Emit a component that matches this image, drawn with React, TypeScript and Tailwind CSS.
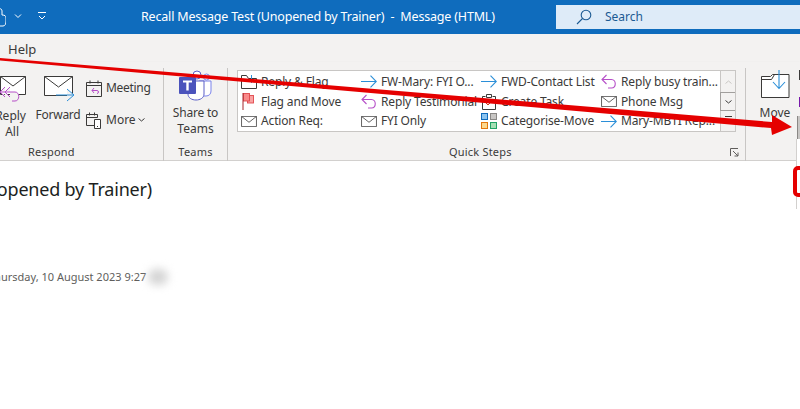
import React from 'react';

const font = { fontFamily: '"Noto Sans", "Open Sans", sans-serif' };

// 메일 봉투 아이콘
const Envelope = ({ size = 20 }: { size?: number }) => (
  <svg width={size} height={Math.round(size * 0.7)} viewBox="0 0 20 14" fill="none" stroke="#3b3a39" strokeWidth="1">
    <path d="M.5.5h19v13H.5z" fill="#fff" />
    <path d="M.5.5 10 8l9.5-7.5" />
  </svg>
);

const BlueArrow = () => (
  <svg width="16" height="13" viewBox="0 0 16 13" fill="none" stroke="#2b8fd8" strokeWidth="1.1">
    <path d="M0 6.500h15M9.500.7l5.800 5.800-5.800 5.800" />
  </svg>
);

const PurpleReply = () => (
  <svg width="16" height="15" viewBox="0 0 16 15" fill="none" stroke="#b64fc8" strokeWidth="1.1">
    <path d="M5.500 1 1 5.500 5.500 10M1 5.500h9.500c5 0 5 8.500 0 8.500H7" />
  </svg>
);

const FlagIcon = () => (
  <svg width="16" height="17" viewBox="0 0 16 17">
    <rect x="6.500" y="2.500" width="6" height="7.500" fill="#f9a3a3" stroke="#e0474c" strokeWidth=".9" />
    <rect x="2.500" y=".5" width="6" height="7.500" fill="#f98a8a" stroke="#e0474c" strokeWidth=".9" />
    <path d="M2 0v17" stroke="#a4262c" strokeWidth="1" />
  </svg>
);

const TaskIcon = () => (
  <svg width="16" height="17" viewBox="0 0 16 17" fill="none" stroke="#3b3a39">
    <path d="M4.500 3.500h-3v13h13v-13h-3M5.500 1.500h5v3h-5z" fill="#fff" />
    <path d="M5 10l2 2 4-4" stroke="#c43e1c" />
  </svg>
);

const CategoryIcon = () => (
  <svg width="16" height="16" viewBox="0 0 16 16">
    <rect x=".5" y=".5" width="6" height="6" fill="#8cc4ef" stroke="#0f6cbd" />
    <rect x="9.500" y=".5" width="6" height="6" fill="#c8c6c4" stroke="#8a8886" />
    <rect x=".5" y="9.500" width="6" height="6" fill="#fcd88f" stroke="#e3770e" />
    <rect x="9.500" y="9.500" width="6" height="6" fill="#a6dfb5" stroke="#21a366" />
  </svg>
);

const ReplyFlagIcon = () => (
  <svg width="16" height="14" viewBox="0 0 16 14" fill="none" stroke="#3b3a39">
    <path d="M.5 3.500V.5h5l2 3h8v10H.5z" />
    <path d="M10.500 0v8" stroke="#2b8fd8" />
  </svg>
);

const quickSteps: { icon: React.ReactNode; label: string }[][] = [
  [
    { icon: <ReplyFlagIcon />, label: 'Reply & Flag' },
    { icon: <FlagIcon />, label: 'Flag and Move' },
    { icon: <Envelope size={16} />, label: 'Action Req:' },
  ],
  [
    { icon: <BlueArrow />, label: 'FW-Mary: FYI O...' },
    { icon: <PurpleReply />, label: 'Reply Testimonial' },
    { icon: <Envelope size={16} />, label: 'FYI Only' },
  ],
  [
    { icon: <BlueArrow />, label: 'FWD-Contact List' },
    { icon: <TaskIcon />, label: 'Create Task' },
    { icon: <CategoryIcon />, label: 'Categorise-Move' },
  ],
  [
    { icon: <PurpleReply />, label: 'Reply busy train...' },
    { icon: <Envelope size={16} />, label: 'Phone Msg' },
    { icon: <BlueArrow />, label: 'Mary-MBTI Rep...' },
  ],
];

const App = () => {
  return (
    <div className="relative w-[800px] h-[409px] overflow-hidden bg-white flex flex-col text-[#3b3a39]" style={font}>
      {/* 타이틀 바 */}
      <div className="h-[34px] bg-[#0f6cbd] flex items-center text-white shrink-0">
        <svg width="6" height="20" viewBox="0 0 6 20" fill="none" stroke="#fff" strokeWidth="1" className="shrink-0">
          <path d="M-3 8h1V4c0-3 4-3 4 0v4c3 0 4 1 4 3v3c0 3-1 5-3 5H-3" />
        </svg>
        <svg width="8" height="5" viewBox="0 0 8 5" fill="none" stroke="#fff" className="ml-[8px] mt-[-2px]">
          <path d="M1 .5 4 3.500 7 .5" />
        </svg>
        <svg width="10" height="9" viewBox="0 0 10 9" fill="none" stroke="#fff" className="ml-[15px] mb-[1px]">
          <path d="M1 .5h8M2 4l3 3 3-3" />
        </svg>
        <span className="ml-[94px] w-[415px] text-[12.5px] tracking-[-0.18px] whitespace-pre">Recall Message Test (Unopened by Trainer)  -  Message (HTML)</span>
        <div className="w-[244px] h-[24px] bg-[#deebf8] flex items-center text-[#1c5a93] text-[12px]">
          <svg width="16" height="16" viewBox="0 0 16 16" fill="none" stroke="#1c5a93" strokeWidth="1.1" className="ml-[20px]">
            <circle cx="10" cy="6" r="4.800" />
            <path d="M6.500 9.500 1 15" />
          </svg>
          <span className="ml-[13px]">Search</span>
        </div>
      </div>

      {/* 탭 */}
      <div className="h-[28px] bg-[#f3f2f1] flex items-center pl-[8px] pt-[3px] text-[13px] shrink-0">
        <span>Help</span>
      </div>

      {/* 리본 */}
      <div className="h-[99px] bg-[#f3f2f1] border-b border-[#d2d0ce] flex text-[12px] shrink-0 shadow-[0_1px_2px_rgba(0,0,0,0.12)]">
        <div className="w-[164px] h-[93px] mt-[6px] border-r border-[#c8c6c4] flex flex-col shrink-0">
          <div className="flex h-[76px]">
            <div className="w-[38px] -ml-[12px] flex flex-col items-end leading-[16px] shrink-0">
              <svg width="33" height="33" viewBox="0 0 33 33" fill="none" className="mt-[8px]">
                <path d="M7.500.5h25v18h-25z" fill="#fff" stroke="#3b3a39" />
                <path d="M7.500.500 20 10 32.500.5" stroke="#3b3a39" />
                <path d="M12 11l-5 5 5 5M17 11l-5 5 5 5M8 16h14c5 0 5 9 0 9h-3" stroke="#b64fc8" fill="#f3f2f1" />
              </svg>
              <span className="mt-[-1px]">Reply</span>
              <span className="pr-[7px]">All</span>
            </div>
            <div className="w-[46px] ml-[9px] flex flex-col items-center leading-[16px] shrink-0">
              <svg width="31" height="27" viewBox="0 0 31 27" fill="none" className="mt-[8px] ml-[3px]">
                <path d="M.5.5h28v19H.5z" fill="#fff" stroke="#3b3a39" />
                <path d="M.5.500 14.500 11l14-10.500" stroke="#3b3a39" />
                <path d="M12 19h17M23 13l7 6-7 6" stroke="#2b8fd8" fill="#f3f2f1" />
              </svg>
              <span className="mt-[4px] tracking-[-0.25px]">Forward</span>
            </div>
            <div className="ml-[5px] flex flex-col pt-[11px] gap-[14px]">
              <div className="flex items-center gap-[3px]">
                <svg width="17" height="17" viewBox="0 0 17 17" fill="none" stroke="#3b3a39">
                  <path d="M.5 2.500h15v14H.5zM.5 5.500h15M4 .5v3M12 .5v3" />
                  <path d="M8 8 6 10.500 8 13M6 10.500h5c2 0 2 3 0 3" stroke="#b64fc8" />
                </svg>
                <span className="tracking-[-0.3px]">Meeting</span>
              </div>
              <div className="flex items-center gap-[3px]">
                <svg width="17" height="17" viewBox="0 0 17 17" fill="none" stroke="#3b3a39">
                  <path d="M8 13.500H.5V2.500h11v3M.5 5.500h11M3.500 .5v3M8.500 .5v3" />
                  <path d="M8.500 7.500h6v9h-6zM11 14.500h1" fill="#fff" />
                </svg>
                <span>More</span>
                <svg width="7" height="4" viewBox="0 0 7 4" fill="none" stroke="#3b3a39" className="-ml-[1px]">
                  <path d="M.5.500 3.500 3 6.500.5" />
                </svg>
              </div>
            </div>
          </div>
          <div className="text-[11px] pl-[28px] leading-[16px] tracking-[0.2px]">Respond</div>
        </div>

        <div className="w-[64px] h-[93px] mt-[6px] border-r border-[#c8c6c4] flex flex-col items-center shrink-0">
          <div className="h-[76px] flex flex-col items-center leading-[16px]">
            <svg width="33" height="31" viewBox="0 0 33 31" className="mt-[2px]">
              <circle cx="18" cy="5" r="4" fill="#fff" stroke="#5b5fc7" />
              <circle cx="27.500" cy="7" r="3" fill="#fff" stroke="#7b83eb" />
              <path d="M20 11h12v10c0 3-2 5-5 5H20z" fill="#fff" stroke="#7b83eb" />
              <path d="M9 11h16v13c0 8-16 8-16 0z" fill="#fff" stroke="#5b5fc7" />
              <rect x="0" y="7" width="17" height="17" rx="1" fill="#4b53bc" />
              <path d="M4 10.500h9v2H9.700v8H7.300v-8H4z" fill="#fff" />
            </svg>
            <span className="mt-[4px] tracking-[-0.2px]">Share to</span>
            <span>Teams</span>
          </div>
          <div className="text-[11px] leading-[16px] tracking-[0.2px]">Teams</div>
        </div>

        <div className="w-[518px] h-[93px] mt-[6px] border-r border-[#c8c6c4] flex flex-col shrink-0">
          <div className="h-[76px] pl-[9px] pt-[2px]">
            <div className="w-[499px] h-[62px] bg-white border border-[#c8c6c4] flex">
              {quickSteps.map((column, i) => (
                <div key={i} className="w-[120px] flex flex-col pt-[1px] shrink-0">
                  {column.map((step) => (
                    <div key={step.label} className="h-[20px] flex items-center whitespace-nowrap">
                      <span className="w-[23px] pl-[3px] flex items-center shrink-0">{step.icon}</span>
                      <span className="tracking-[-0.15px]">{step.label}</span>
                    </div>
                  ))}
                </div>
              ))}
              <div className="w-[15px] ml-[2px] flex flex-col shrink-0">
                <div className="h-[21px] bg-[#f3f2f1] border-l border-[#c8c6c4] flex items-center justify-center">
                  <svg width="7" height="4" viewBox="0 0 7 4" fill="none" stroke="#c8c6c4"><path d="M.5 3.500 3.500 1l3 2.500" /></svg>
                </div>
                <div className="h-[19px] bg-[#f3f2f1] border border-r-0 border-[#a19f9d] flex items-center justify-center">
                  <svg width="7" height="4" viewBox="0 0 7 4" fill="none" stroke="#3b3a39"><path d="M.5.500 3.500 3l3-2.500" /></svg>
                </div>
                <div className="h-[20px] bg-[#f3f2f1] border-l border-[#c8c6c4] flex items-start justify-center pt-[5px]">
                  <div className="w-[7px] h-[1px] bg-[#3b3a39]" />
                </div>
              </div>
            </div>
          </div>
          <div className="flex items-center justify-between pl-[221px] pr-[6px] text-[11px] leading-[16px] tracking-[0.2px] whitespace-nowrap">
            <span>Quick Steps</span>
            <svg width="9" height="9" viewBox="0 0 9 9" fill="none" stroke="#605e5c">
              <path d="M.5 8V.5H8M3 3l5 5M8 4.500V8H4.500" />
            </svg>
          </div>
        </div>

        <div className="flex-1 flex mt-[6px]">
          <div className="w-[58px] flex flex-col items-center shrink-0">
            <svg width="29" height="28" viewBox="0 0 29 28" fill="none" className="mt-[2px] shrink-0">
              <path d="M.5 6.500h9l2-2h16.500v23H.5z" fill="#fff" stroke="#3b3a39" />
              <path d="M.5 9.500h10l3-5" stroke="#3b3a39" />
              <path d="M18 0v18M12 12l6 6.500 6-6.500" stroke="#2b8fd8" strokeWidth="1.100" />
            </svg>
            <span className="mt-[7px] leading-[16px]">Move</span>
          </div>
        </div>
      </div>

      {/* 본문 */}
      <div className="flex-1 bg-white">
        <div className="-ml-[163px] pt-[16px] text-[18px] leading-[24px] text-[#201f1e] whitespace-nowrap tracking-[-0.2px]">
          Recall Message (Unopened by Trainer)
        </div>
        <div className="-ml-[12px] mt-[68px] flex items-center text-[11px] leading-[16px] text-[#605e5c] whitespace-nowrap">
          Thursday, 10 August 2023 9:27
          <div className="ml-[2px] w-[20px] h-[16px] rounded-full bg-[#d5d5d5] blur-[4px]" />
        </div>
      </div>

      {/* 오른쪽 끝 메뉴와 주석 */}
      <div className="absolute left-[799px] top-[70px] w-[2px] h-[10px] bg-[#3b3a39]" />
      <div className="absolute left-[799px] top-[97px] w-[2px] h-[10px] bg-[#7719aa]" />
      <div className="absolute left-[797px] top-[116px] w-[4px] h-[23px] bg-[#c8c6c4] border-l border-[#8a8886]" />
      <div className="absolute left-[796px] top-[139px] w-[5px] h-[70px] bg-white border-l border-[#d2d0ce]" />
      <div className="absolute left-[793px] top-[166px] w-[20px] h-[31px] rounded-[5px] border-[4px] border-[#e50000]" />
      <svg className="absolute left-0 top-0" width="800" height="409" viewBox="0 0 800 409">
        <path d="M0 58 772 122 772 115 792 127 772 135 771 128 0 60.500z" fill="#e50000" />
      </svg>
    </div>
  );
};

export default App;
